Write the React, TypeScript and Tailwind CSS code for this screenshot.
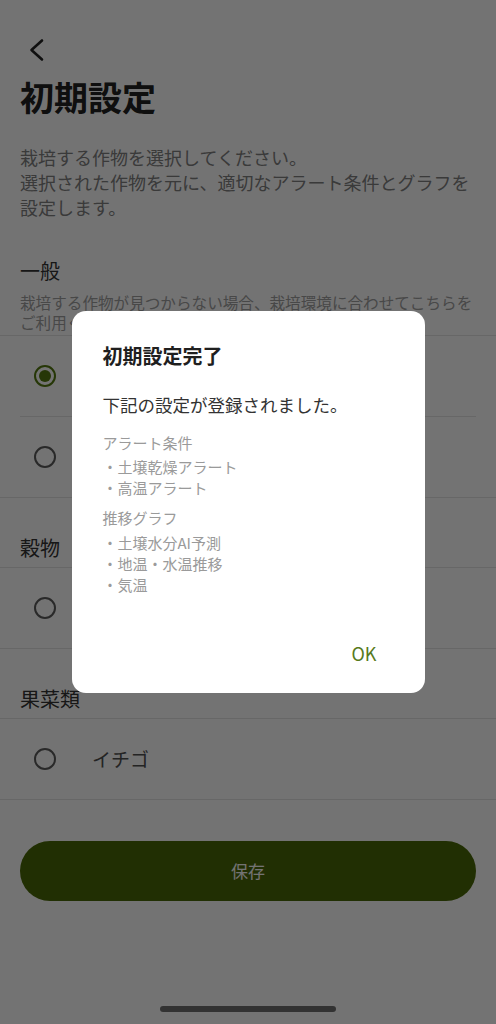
import { useState } from "react";

type Crop = { id: string; label: string };

const sections: { title: string; note?: string[]; items: Crop[] }[] = [
  {
    title: "一般",
    note: [
      "栽培する作物が見つからない場合、栽培環境に合わせてこちらを",
      "ご利用ください。",
    ],
    items: [
      { id: "open", label: "露地" },
      { id: "house", label: "施設" },
    ],
  },
  { title: "穀物", items: [{ id: "rice", label: "水稲" }] },
  { title: "果菜類", items: [{ id: "strawberry", label: "イチゴ" }] },
];

const Radio = ({ checked }: { checked: boolean }) => (
  <span
    className={`flex h-[22px] w-[22px] items-center justify-center rounded-full border-2 ${
      checked ? "border-[#557a10]" : "border-[#5c5c5c]"
    }`}
  >
    {checked && <span className="h-[12px] w-[12px] rounded-full bg-[#557a10]" />}
  </span>
);

const App = () => {
  const [selected, setSelected] = useState("open");
  const [open, setOpen] = useState(true);

  return (
    <div className="relative min-h-screen bg-white font-['Noto_Sans_CJK_JP','Noto_Sans',sans-serif]">
      <div className="px-5">
        <div className="mt-[38px] flex h-[24px] items-center pl-2">
          <svg width="16" height="24" viewBox="0 0 16 24" fill="none">
            <polyline
              points="14,2.5 3.5,12 14,21.5"
              stroke="#222"
              strokeWidth="2.6"
              strokeLinecap="round"
              strokeLinejoin="round"
            />
          </svg>
        </div>
        <h1 className="mt-[13px] text-[34px] font-bold leading-[44px] text-[#222]">初期設定</h1>
        <p className="mt-[26px] text-[18px] leading-[25px] text-[#808080]">
          栽培する作物を選択してください。
          <br />
          選択された作物を元に、適切なアラート条件とグラフを
          <br />
          設定します。
        </p>
      </div>

      {sections.map((section, i) => (
        <div key={section.title}>
          <div className={`px-5 ${i === 0 ? "pt-[37px] pb-[3px]" : "pt-9 pb-[5px]"}`}>
            <h2 className="text-[20px] leading-7 text-[#333]">{section.title}</h2>
            {section.note && (
              <p className="mt-[7px] whitespace-nowrap text-[15.6px] leading-5 text-[#a0a0a0]">
                {section.note[0]}
                <br />
                {section.note[1]}
              </p>
            )}
          </div>
          <div className="border-y border-[#e5e5e5]">
            {section.items.map((item, j) => (
              <div key={item.id}>
                {j > 0 && <div className="mx-5 h-px bg-[#e5e5e5]" />}
                <button
                  onClick={() => setSelected(item.id)}
                  className="flex h-20 w-full items-center gap-9 pl-[34px] text-left"
                >
                  <Radio checked={selected === item.id} />
                  <span className="text-[19px] text-[#505050]">{item.label}</span>
                </button>
              </div>
            ))}
          </div>
        </div>
      ))}

      <div className="px-5">
        <button className="mt-[41px] flex h-[60px] w-full items-center justify-center rounded-full bg-[#4b6807] text-[17px] text-white">
          保存
        </button>
      </div>
      <div className="mx-auto mt-[105px] h-[6px] w-[176px] rounded-full bg-[#707070]" />

      {open && (
        <div className="fixed inset-0 flex items-start justify-center bg-[rgba(0,0,0,0.55)] pt-[311px]">
          <div className="w-[353px] rounded-[14px] bg-white pt-[31px] pb-[28px] pl-[31px] pr-8">
            <h3 className="text-[20px] font-bold leading-7 text-[#1f1f1f]">初期設定完了</h3>
            <p className="mt-[23px] text-[17.5px] leading-6 text-[#333]">下記の設定が登録されました。</p>
            <p className="mt-[15px] text-[15px] leading-[21px] text-[#9a9a9a]">アラート条件</p>
            <ul className="mt-[3px] text-[15px] leading-[21px] text-[#9a9a9a]">
              <li>・土壌乾燥アラート</li>
              <li>・高温アラート</li>
            </ul>
            <p className="mt-[9px] text-[15px] leading-[21px] text-[#9a9a9a]">推移グラフ</p>
            <ul className="mt-1 text-[15px] leading-[21px] text-[#9a9a9a]">
              <li>・土壌水分AI予測</li>
              <li>・地温・水温推移</li>
              <li>・気温</li>
            </ul>
            <div className="mt-[46px] flex justify-end">
              <button
                onClick={() => setOpen(false)}
                className="px-4 text-[18px] leading-6 text-[#587a1c]"
              >
                OK
              </button>
            </div>
          </div>
        </div>
      )}
    </div>
  );
};

export default App;
